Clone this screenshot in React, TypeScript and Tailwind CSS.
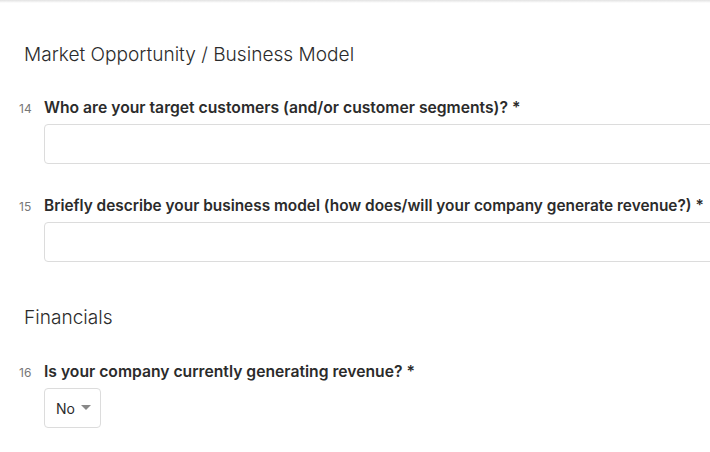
const Question = ({
  num,
  label,
  size = "text-[15.7px]",
  children,
}: {
  num: number
  label: string
  size?: string
  children: React.ReactNode
}) => {
  return (
    <div className="flex flex-col">
      <div className="flex items-baseline h-[24px] pt-[1px]">
        <span className="w-[44px] shrink-0 pl-[19px] text-[12px] text-[#777]">{num}</span>
        <span className={`${size} font-semibold text-[#2b2b2b] whitespace-nowrap`}>
          {label}
        </span>
      </div>
      <div className="pl-[44px] mt-[5px]">{children}</div>
    </div>
  )
}

const TextBox = () => (
  <div className="w-[700px] h-[40px] border border-[#dcdcdc] rounded-[4px] bg-white"></div>
)

export default function App() {
  return (
    <div
      className="w-[710px] h-[452px] bg-white overflow-hidden relative"
      style={{ fontFamily: "Inter, 'Liberation Sans', sans-serif" }}
    >
      <div className="h-[3px] bg-gradient-to-b from-[#e2e2e2] to-white"></div>
      <div className="pt-[38px]">
        <h2 className="pl-[24px] text-[19.1px] font-light text-[#2b2b2b] leading-[26px]">
          Market Opportunity / Business Model
        </h2>
        <div className="mt-[28px] flex flex-col gap-[29px]">
          <Question num={14} label="Who are your target customers (and/or customer segments)? *">
            <TextBox />
          </Question>
          <Question
            num={15}
            size="text-[15.4px]"
            label="Briefly describe your business model (how does/will your company generate revenue?) *"
          >
            <TextBox />
          </Question>
        </div>
        <h2 className="pl-[24px] mt-[42px] text-[19.1px] font-light text-[#2b2b2b] leading-[26px]">
          Financials
        </h2>
        <div className="mt-[29px]">
          <Question num={16} label="Is your company currently generating revenue? *">
            <button className="h-[40px] w-[57px] border border-[#dcdcdc] rounded-[4px] bg-white flex items-center pl-[11px] gap-[6px] text-[14px] text-[#2b2b2b]">
              No
              <svg width="10" height="6" viewBox="0 0 10 6">
                <path d="M0 0 L10 0 L5 5 Z" fill="#888" />
              </svg>
            </button>
          </Question>
        </div>
      </div>
    </div>
  )
}
